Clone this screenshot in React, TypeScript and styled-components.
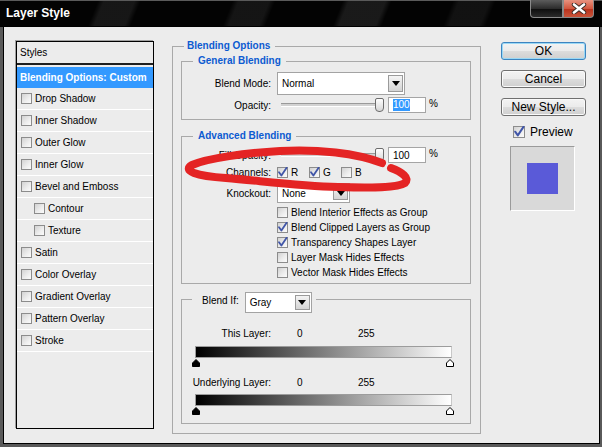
import React from 'react';
import styled, { createGlobalStyle } from 'styled-components';

const GlobalStyle = createGlobalStyle`
  *, *::before, *::after { box-sizing: border-box; }
  html, body { margin: 0; padding: 0; background: #111; }
  body { font-family: "Liberation Sans", Arial, sans-serif; font-size: 10px; color: #000; }
`;

const STYLE_ITEMS = [
  { label: 'Drop Shadow' },
  { label: 'Inner Shadow' },
  { label: 'Outer Glow' },
  { label: 'Inner Glow' },
  { label: 'Bevel and Emboss' },
  { label: 'Contour', indent: true },
  { label: 'Texture', indent: true },
  { label: 'Satin' },
  { label: 'Color Overlay' },
  { label: 'Gradient Overlay' },
  { label: 'Pattern Overlay' },
  { label: 'Stroke' },
];

const ADVANCED_OPTS = [
  { label: 'Blend Interior Effects as Group', checked: false },
  { label: 'Blend Clipped Layers as Group', checked: true },
  { label: 'Transparency Shapes Layer', checked: true },
  { label: 'Layer Mask Hides Effects', checked: false },
  { label: 'Vector Mask Hides Effects', checked: false },
];

export default function App() {
  return (
    <>
      <GlobalStyle />
      <Window>
        <TitleBar>
          <TitleText>Layer Style</TitleText>
          <CaptionGroup>
            <CaptionButton $kind="min" />
            <CaptionButton $kind="close">
              <svg width="16" height="11" viewBox="0 0 16 11">
                <path d="M3 1.5 L13 9.5 M13 1.5 L3 9.5" stroke="#3a2a25" strokeWidth="4.4" strokeLinecap="round" />
                <path d="M3 1.5 L13 9.5 M13 1.5 L3 9.5" stroke="#fff" strokeWidth="2.6" strokeLinecap="round" />
              </svg>
            </CaptionButton>
          </CaptionGroup>
        </TitleBar>

        <Frame>
          <Body>
            <StylesPanel>
              <PanelHeader>Styles</PanelHeader>
              <ActiveRow>Blending Options: Custom</ActiveRow>
              {STYLE_ITEMS.map((item) => (
                <StyleRow key={item.label} $indent={!!item.indent}>
                  <CheckBox />
                  <span>{item.label}</span>
                </StyleRow>
              ))}
            </StylesPanel>

            <MainGroup>
              <GroupTitle>Blending Options</GroupTitle>

              <SubGroup>
                <SubTitle>General Blending</SubTitle>
                <GroupBody $pb={6}>
                  <Row $h={23}>
                    <Label>Blend Mode:</Label>
                    <Select $w={128} $h={23} value="Normal" />
                  </Row>
                  <Row $h={16} $mt={2}>
                    <Label>Opacity:</Label>
                    <Slider />
                    <NumberField>
                      <Selected>100</Selected>
                    </NumberField>
                    <Percent>%</Percent>
                  </Row>
                </GroupBody>
              </SubGroup>

              <SubGroup $mt={10}>
                <SubTitle>Advanced Blending</SubTitle>
                <GroupBody $pb={3}>
                  <Row $h={16}>
                    <Label>Fill Opacity:</Label>
                    <Slider />
                    <NumberField>100</NumberField>
                    <Percent>%</Percent>
                  </Row>
                  <Row $h={17} $mt={1}>
                    <Label>Channels:</Label>
                    <Channel>
                      <CheckBox checked />
                      <span>R</span>
                    </Channel>
                    <Channel>
                      <CheckBox checked />
                      <span>G</span>
                    </Channel>
                    <Channel>
                      <CheckBox />
                      <span>B</span>
                    </Channel>
                  </Row>
                  <Row $h={20} $mt={2}>
                    <Label>Knockout:</Label>
                    <Select $w={73} $h={20} value="None" />
                  </Row>
                  <CheckList>
                    {ADVANCED_OPTS.map((o) => (
                      <CheckRow key={o.label}>
                        <CheckBox checked={o.checked} />
                        <span>{o.label}</span>
                      </CheckRow>
                    ))}
                  </CheckList>
                </GroupBody>
              </SubGroup>

              <SubGroup $mt={8}>
                <BlendIfLegend>
                  <span>Blend If:</span>
                  <Select $w={67} $h={21} value="Gray" />
                </BlendIfLegend>
                <GroupBody $pb={8}>
                  <Row $h={14} $mt={15}>
                    <Label>This Layer:</Label>
                    <RangeValue>0</RangeValue>
                    <span>255</span>
                  </Row>
                  <GradientBar $mt={6} />
                  <Markers />
                  <Row $h={14} $mt={8}>
                    <Label>Underlying Layer:</Label>
                    <RangeValue>0</RangeValue>
                    <span>255</span>
                  </Row>
                  <GradientBar $mt={5} />
                  <Markers />
                </GroupBody>
              </SubGroup>
            </MainGroup>

            <SideColumn>
              <DialogButton $primary>OK</DialogButton>
              <DialogButton>Cancel</DialogButton>
              <DialogButton>New Style...</DialogButton>
              <PreviewToggle>
                <CheckBox checked size={12} />
                <span>Preview</span>
              </PreviewToggle>
              <PreviewWell>
                <PreviewSwatch />
              </PreviewWell>
            </SideColumn>
          </Body>
        </Frame>

        <Annotation width="602" height="447" viewBox="0 0 602 447">
          <path
            d="M382 163 C356 153, 318 149, 280 151 C246 153, 208 158, 192 165 C182 171, 196 176, 226 178 C262 181, 300 186, 338 187 C372 188, 398 188, 405 183 C410 178, 402 172, 391 168"
            fill="none"
            stroke="#e42424"
            strokeWidth="8"
            strokeLinecap="round"
          />
        </Annotation>
      </Window>
    </>
  );
}

function CheckBox({ checked = false, size = 11 }: { checked?: boolean; size?: number }) {
  return (
    <Box $size={size}>
      {checked && (
        <svg width={size} height={size} viewBox="0 0 11 11">
          <path d="M2 5.2 L4.4 8.6 L9.6 0.8" fill="none" stroke="#4156a8" strokeWidth="1.8" strokeLinecap="round" strokeLinejoin="round" />
        </svg>
      )}
    </Box>
  );
}

function Select({ $w, $h, value }: { $w: number; $h: number; value: string }) {
  return (
    <SelectBox $w={$w} $h={$h}>
      <SelectText>{value}</SelectText>
      <SelectArrow>
        <svg width="8" height="5" viewBox="0 0 8 5">
          <path d="M0 0 H8 L4 5 Z" fill="#000" />
        </svg>
      </SelectArrow>
    </SelectBox>
  );
}

function Slider() {
  return (
    <SliderWrap>
      <Track />
      <Thumb />
    </SliderWrap>
  );
}

function Markers() {
  return (
    <MarkerRow>
      <svg width="8" height="8" viewBox="0 0 8 8">
        <path d="M4 0.5 L7.5 4 V7.5 H0.5 V4 Z" fill="#000" stroke="#000" />
      </svg>
      <svg width="8" height="8" viewBox="0 0 8 8">
        <path d="M4 0.5 L7.5 4 V7.5 H0.5 V4 Z" fill="#fff" stroke="#000" />
      </svg>
    </MarkerRow>
  );
}

// Styled Components
const Window = styled.div`
  position: relative;
  width: 602px;
  height: 447px;
  display: flex;
  flex-direction: column;
  overflow: hidden;
  background: #2a2412;
`;

const TitleBar = styled.div`
  height: 27px;
  flex-shrink: 0;
  display: flex;
  align-items: center;
  padding-left: 6px;
  border-top: 1px solid #5a5a5a;
  border-bottom: 1px solid #000;
  background:
    linear-gradient(112deg, transparent 0 16%, rgba(255, 255, 255, 0.08) 17% 22%, transparent 23% 38%,
      rgba(255, 255, 255, 0.07) 39% 44%, transparent 45% 56%, rgba(255, 255, 255, 0.09) 57% 63%,
      transparent 64% 74%, rgba(255, 255, 255, 0.06) 75% 80%, transparent 81%),
    #030303;
`;

const TitleText = styled.span`
  color: #fff;
  font-weight: bold;
  font-size: 12px;
  margin-top: -1px;
`;

const CaptionGroup = styled.div`
  align-self: flex-start;
  margin-left: auto;
  margin-right: 8px;
  margin-top: -1px;
  display: flex;
`;

const CaptionButton = styled.div<{ $kind: 'min' | 'close' }>`
  width: ${(p) => (p.$kind === 'min' ? 33 : 31)}px;
  height: 18px;
  display: flex;
  align-items: center;
  justify-content: center;
  border: 1px solid #8a8a8a;
  border-top: none;
  border-radius: ${(p) => (p.$kind === 'min' ? '0 0 0 4px' : '0 0 4px 0')};
  background: ${(p) =>
    p.$kind === 'min'
      ? 'linear-gradient(#5c5c5c 0%, #2c2c2c 50%, #0d0d0d 51%, #2a2a2a 100%)'
      : 'linear-gradient(#e8927f 0%, #d2573f 50%, #b8301b 51%, #c9543a 100%)'};
`;

const Frame = styled.div`
  flex: 1;
  display: flex;
  padding: 0 2px 3px 3px;
  background: #5a5a5a;
`;

const Body = styled.div`
  flex: 1;
  display: flex;
  align-items: flex-start;
  padding-left: 12px;
  background: #ececec;
  border: 1px solid #000;
  border-top: none;
`;

const StylesPanel = styled.div`
  width: 138px;
  height: 388px;
  margin-top: 14px;
  border: 1px solid #000;
  box-shadow: -1px -1px 0 #a0a0a0;
  display: flex;
  flex-direction: column;
`;

const PanelHeader = styled.div`
  height: 23px;
  padding-left: 3px;
  display: flex;
  align-items: center;
  border-bottom: 2px solid #1e1e1e;
  margin-bottom: 2px;
`;

const ActiveRow = styled.div`
  height: 21px;
  padding-left: 3px;
  display: flex;
  align-items: center;
  background: #3399ff;
  color: #fff;
  font-weight: bold;
`;

const StyleRow = styled.div<{ $indent: boolean }>`
  height: 22px;
  display: flex;
  align-items: center;
  gap: 3px;
  padding-left: ${(p) => (p.$indent ? 17 : 4)}px;
  border-bottom: 1px solid #fff;
`;

const Box = styled.span<{ $size: number }>`
  width: ${(p) => p.$size}px;
  height: ${(p) => p.$size}px;
  flex-shrink: 0;
  display: inline-flex;
  border: 1px solid #8c8c8c;
  background: linear-gradient(135deg, #d2d2d2 0%, #eeeeee 60%, #fbfbfb 100%);
  overflow: visible;
  svg { margin: -1px; }
`;

const MainGroup = styled.fieldset`
  width: 309px;
  margin: 13px 0 0 18px;
  padding: 3px 9px 9px 8px;
  border: 1px solid #a9a9a9;
  min-inline-size: 0;
`;

const GroupTitle = styled.legend`
  margin-left: 3px;
  padding: 0 5px 0 3px;
  line-height: 12px;
  font-weight: bold;
  color: #0d5bd1;
`;

const SubGroup = styled.fieldset<{ $mt?: number }>`
  margin: ${(p) => p.$mt ?? 0}px 0 0 0;
  padding: 0;
  border: 1px solid #a9a9a9;
  min-inline-size: 0;
`;

const SubTitle = styled.legend`
  margin-left: 11px;
  padding: 0 5px;
  line-height: 12px;
  font-weight: bold;
  color: #0d5bd1;
`;

const BlendIfLegend = styled.legend`
  margin-left: 10px;
  padding: 0 4px 0 10px;
  height: 14px;
  display: flex;
  align-items: flex-start;
  gap: 6px;
  line-height: 17px;
  & > div { margin-bottom: -7px; }
`;

const GroupBody = styled.div<{ $pb: number }>`
  display: flex;
  flex-direction: column;
  padding: 5px 0 ${(p) => p.$pb}px 0;
`;

const Row = styled.div<{ $h: number; $mt?: number }>`
  height: ${(p) => p.$h}px;
  margin-top: ${(p) => p.$mt ?? 0}px;
  display: flex;
  align-items: center;
`;

const Label = styled.span`
  width: 89px;
  flex-shrink: 0;
  margin-right: 6px;
  text-align: right;
  white-space: nowrap;
`;

const SelectBox = styled.div<{ $w: number; $h: number }>`
  width: ${(p) => p.$w}px;
  height: ${(p) => p.$h}px;
  flex-shrink: 0;
  display: flex;
  align-items: stretch;
  padding: 2px 1px 2px 3px;
  background: #fff;
  border: 1px solid #a3a3a3;
  box-shadow: inset 0 0 0 1px #fff;
`;

const SelectText = styled.span`
  flex: 1;
  display: flex;
  align-items: center;
  padding-left: 1px;
`;

const SelectArrow = styled.span`
  width: 15px;
  display: flex;
  align-items: center;
  justify-content: center;
  border: 1px solid #9a9a9a;
  background: linear-gradient(#f4f4f4, #d4d4d4);
`;

const SliderWrap = styled.div`
  width: 107px;
  height: 16px;
  display: flex;
  align-items: center;
  flex-shrink: 0;
`;

const Track = styled.span`
  flex: 1;
  height: 4px;
  margin-left: 4px;
  background: #d2d2d2;
  border-top: 1px solid #9a9a9a;
  border-bottom: 1px solid #fff;
`;

const Thumb = styled.span`
  width: 9px;
  height: 14px;
  margin-left: -3px;
  border: 1px solid #6c6c6c;
  border-radius: 2px 2px 4px 4px;
  background: linear-gradient(#ffffff, #d6d6d6);
`;

const NumberField = styled.div`
  width: 38px;
  height: 16px;
  margin-left: 4px;
  padding-left: 4px;
  display: flex;
  align-items: center;
  background: #fff;
  border: 1px solid #a5a5a5;
`;

const Selected = styled.span`
  background: #3399ff;
  color: #fff;
  line-height: 12px;
`;

const Percent = styled.span`
  margin-left: 3px;
  align-self: flex-start;
  margin-top: 1px;
`;

const Channel = styled.span`
  width: 32px;
  display: flex;
  align-items: center;
  gap: 3px;
`;

const CheckList = styled.div`
  margin-top: 2px;
  padding-left: 95px;
  display: flex;
  flex-direction: column;
`;

const CheckRow = styled.div`
  height: 15px;
  display: flex;
  align-items: center;
  gap: 3px;
  white-space: nowrap;
`;

const RangeValue = styled.span`
  width: 61px;
  margin-left: 20px;
`;

const GradientBar = styled.div<{ $mt: number }>`
  width: 257px;
  height: 12px;
  margin: ${(p) => p.$mt}px 0 0 13px;
  border: 1px solid #9c9c9c;
  border-right-color: #c8c8c8;
  background: linear-gradient(to right, #000 0%, #fff 100%);
`;

const MarkerRow = styled.div`
  width: 262px;
  height: 8px;
  margin: 1px 0 0 10px;
  display: flex;
  justify-content: space-between;
`;

const SideColumn = styled.div`
  width: 85px;
  margin: 15px 0 0 20px;
  display: flex;
  flex-direction: column;
  align-items: flex-start;
  gap: 10px;
`;

const DialogButton = styled.div<{ $primary?: boolean }>`
  width: 85px;
  height: 18px;
  display: flex;
  align-items: center;
  justify-content: center;
  font-size: 12px;
  border: 1px solid ${(p) => (p.$primary ? '#3c84c0' : '#707070')};
  border-radius: 3px;
  background: linear-gradient(#f3f3f3 0%, #ebebeb 48%, #dcdcdc 52%, #cfcfcf 100%);
  box-shadow: ${(p) => (p.$primary ? 'inset 0 0 0 1px #9ad8f5' : 'inset 0 0 0 1px #fafafa')};
`;

const PreviewToggle = styled.div`
  margin: -1px 0 0 12px;
  display: flex;
  align-items: center;
  gap: 5px;
  font-size: 12px;
`;

const PreviewWell = styled.div`
  width: 65px;
  height: 65px;
  margin: -3px 0 0 9px;
  display: flex;
  align-items: center;
  justify-content: center;
  background: #d9d9d9;
  border: 1px solid #fff;
  border-top-color: #9a9a9a;
  border-left-color: #9a9a9a;
`;

const PreviewSwatch = styled.div`
  width: 31px;
  height: 31px;
  margin-top: -1px;
  background: #5a5ad8;
`;

const Annotation = styled.svg`
  position: absolute;
  left: 0;
  top: 0;
  pointer-events: none;
`;
